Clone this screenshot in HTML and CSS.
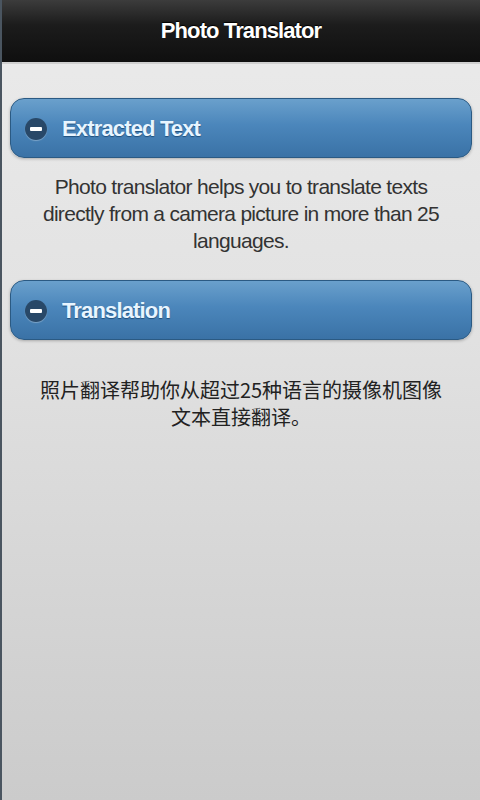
FILE: index.html
```html
<!DOCTYPE html>
<html lang="en">
<head>
  <meta charset="UTF-8">
  <title>Photo Translator</title>
  <link rel="stylesheet" href="styles.css">
</head>
<body>
<div class="page">
  <div class="header">Photo Translator</div>
  <div class="content">
    <div class="collapsible">
      <div class="coll-head"><span class="icon"></span>Extracted Text</div>
      <p class="coll-body">Photo translator helps you to translate texts directly from a camera picture in more than 25 languages.</p>
    </div>
    <div class="collapsible">
      <div class="coll-head"><span class="icon"></span>Translation</div>
      <p class="coll-body cjk">照片翻译帮助你从超过25种语言的摄像机图像文本直接翻译。</p>
    </div>
  </div>
</div>
</body>
</html>
```

FILE: styles.css
```css
html, body, div, p, span {padding:0; margin:0;}

body {width:480px; height:800px; overflow:hidden; font-family:"Liberation Sans", Arial, sans-serif;}

.page {height:800px; border-left:2px solid #4a5560; background:linear-gradient(#ebebeb, #e2e2e2 40%, #cbcbcb);}

.header {height:62px; line-height:62px; text-align:center; font-size:22px; font-weight:bold; color:#fff; letter-spacing:-0.9px;
         text-shadow:0 -1px 1px #000; border-bottom:2px solid #cfcfcf;
         background:linear-gradient(#3c3c3c, #1c1c1c 40%, #0f0f0f);}

.content {padding:34px 8px 0 8px;}

.coll-head {display:flex; align-items:center; height:60px; padding-top:2px; box-sizing:border-box; font-size:22px; font-weight:bold;
            color:#e8f5ff; letter-spacing:-0.85px;
            text-shadow:0 1px 1px #1f4f7c; border:1px solid #2b5a83; border-radius:14px;
            background:linear-gradient(#6aa0cc, #4b86bb 45%, #3a72a6);
            box-shadow:0 1px 3px rgba(0,0,0,0.25);}
.icon {position:relative; width:22px; height:22px; margin:0 15px 0 14px; border-radius:50%; background:#284868;
       box-shadow:0 1px 1px rgba(255,255,255,0.3);}
.icon::after {content:""; position:absolute; left:5px; top:9px; width:12px; height:4px; border-radius:1px; background:#fff;}

.coll-body {padding:15px 20px 0 20px; height:107px; font-size:21px; line-height:27px; text-align:center; color:#333; letter-spacing:-0.7px;}
.coll-body.cjk {padding-top:36px; height:106px; font-family:"Noto Sans CJK SC", sans-serif; font-size:20px; line-height:27px; color:#222; letter-spacing:0;}
```
